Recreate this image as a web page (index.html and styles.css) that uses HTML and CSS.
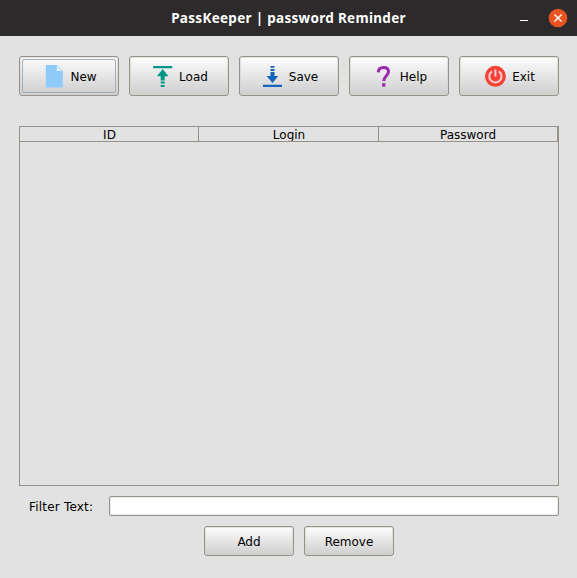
FILE: index.html
```
<!DOCTYPE html>
<html lang="en">
<head>
<meta charset="utf-8">
<title>PassKeeper | password Reminder</title>
<link rel="stylesheet" href="styles.css">
</head>
<body>
<header class="titlebar">
  <h1 class="title">PassKeeper | password Reminder</h1>
  <div class="controls">
    <svg width="8" height="20" viewBox="0 0 8 20"><path d="M0 12h8v1H0z" fill="#fff"/></svg>
    <svg width="20" height="20" viewBox="0 0 20 20"><circle cx="10" cy="10" r="9.3" fill="#e95420"/><path d="M6.4 6.4l7.2 7.2M13.6 6.4l-7.2 7.2" stroke="#fff" stroke-width="1.4"/></svg>
  </div>
</header>
<main class="content">
  <div class="toolbar">
    <button class="button focused"><svg class="icon" viewBox="0 0 24 24"><path d="M4.8 1h11l6 6v16.6h-17z" fill="#90caf9"/><path d="M15.8 2v5h5z" fill="#e1f5fe"/></svg><span>New</span></button>
    <button class="button"><svg class="icon" viewBox="0 0 24 24"><path d="M3.2 2h19v2.2h-19zM12.7 5l5.8 7.2h-3.8v4.3h-4v-4.3H6.9zM10.7 17.5h4v2h-4zM10.7 21h4v2h-4z" fill="#009688"/></svg><span>Load</span></button>
    <button class="button"><svg class="icon" viewBox="0 0 24 24"><path d="M3 20.8h19V23H3zM10.5 2h4v1.7h-4zM10.5 5h4v2h-4zM10.5 8h4v4h3.8L12.5 19l-5.8-7H10.5z" fill="#1565c0"/></svg><span>Save</span></button>
    <button class="button"><svg class="icon" viewBox="0 0 24 24"><path d="M7.2 8.3C7.4 4.9 9.6 3.5 12.6 3.5c3 0 4.9 1.5 4.9 4.1 0 4.3-4.7 4.6-4.7 9.4" fill="none" stroke="#9c27b0" stroke-width="3"/><path d="M11.1 19.2h3.3v3.4h-3.3z" fill="#9c27b0"/></svg><span>Help</span></button>
    <button class="button"><svg class="icon" viewBox="0 0 24 24"><circle cx="12.4" cy="12.3" r="10.5" fill="#f44336"/><path d="M9.1 7.3a6.1 6.1 0 1 0 6.6 0M12.4 5.5v7" fill="none" stroke="#ffcdd2" stroke-width="2"/></svg><span>Exit</span></button>
  </div>
  <section class="table">
    <div class="table-head"><span>ID</span><span>Login</span><span>Password</span></div>
  </section>
  <div class="filter">
    <label for="filter">Filter Text:</label>
    <input id="filter" type="text">
  </div>
  <div class="actions">
    <button class="button">Add</button>
    <button class="button">Remove</button>
  </div>
</main>
</body>
</html>
```
FILE: styles.css
```
* { box-sizing: border-box; }
body {
  margin: 0;
  height: 578px;
  overflow: hidden;
  background: #e2e2e2;
  color: #000;
  font: 12px "DejaVu Sans", sans-serif;
}
.titlebar {
  display: grid;
  grid-template-columns: 1fr auto 1fr;
  align-items: center;
  height: 36px;
  padding: 0 9px;
  background: #2c2a2a;
}
.title {
  grid-column: 2;
  margin: 0;
  color: #fff;
  font: bold 13.5px/36px "Noto Sans", sans-serif;
  letter-spacing: 0.3px;
}
.controls {
  display: flex;
  justify-content: flex-end;
  gap: 20px;
}
.content { padding: 20px 18px 0 19px; }
.toolbar { display: flex; gap: 10px; }
.button {
  display: flex;
  align-items: center;
  justify-content: center;
  gap: 4px;
  width: 100px;
  height: 40px;
  padding: 0;
  border: 1px solid #96928a;
  border-radius: 3px;
  background: linear-gradient(#fdfdfd, #cecece);
  box-shadow: inset 0 0 0 1px rgba(215, 212, 207, 0.6);
  color: #000;
  font: 12px "DejaVu Sans", sans-serif;
}
.toolbar .button { gap: 5px; }
.toolbar .button span { padding-top: 1px; }
.focused {
  position: relative;
  outline: none;
}
.focused::after {
  content: "";
  position: absolute;
  inset: 2px;
  border: 1px solid #a3adb8;
  border-radius: 2px;
}
.icon { width: 24px; height: 24px; flex: none; }
.table {
  height: 360px;
  margin-top: 30px;
  border: 1px solid #96928a;
}
.table-head {
  display: flex;
  height: 15px;
  border-bottom: 1px solid #96928a;
  line-height: 17px;
  text-align: center;
}
.table-head span {
  width: 180px;
  height: 14px;
  padding-left: 1px;
  overflow: hidden;
  border-right: 1px solid #96928a;
}
.table-head span:first-child { width: 179px; }
.table-head span:last-child { width: 179px; padding-left: 0; }
.filter {
  display: flex;
  align-items: center;
  height: 20px;
  margin-top: 10px;
  padding-left: 10px;
}
.filter label {
  width: 80px;
  padding-top: 1px;
  letter-spacing: 0.2px;
}
.filter input {
  flex: 1;
  min-width: 0;
  height: 20px;
  border: 1px solid #96928a;
  border-radius: 2px;
  background: #fff;
  box-shadow: inset 0 0 0 1px #eeecea;
}
.actions {
  display: flex;
  justify-content: center;
  gap: 10px;
  margin-top: 10px;
  padding-left: 20px;
}
.actions .button { width: 90px; height: 30px; padding-top: 1px; }
```
